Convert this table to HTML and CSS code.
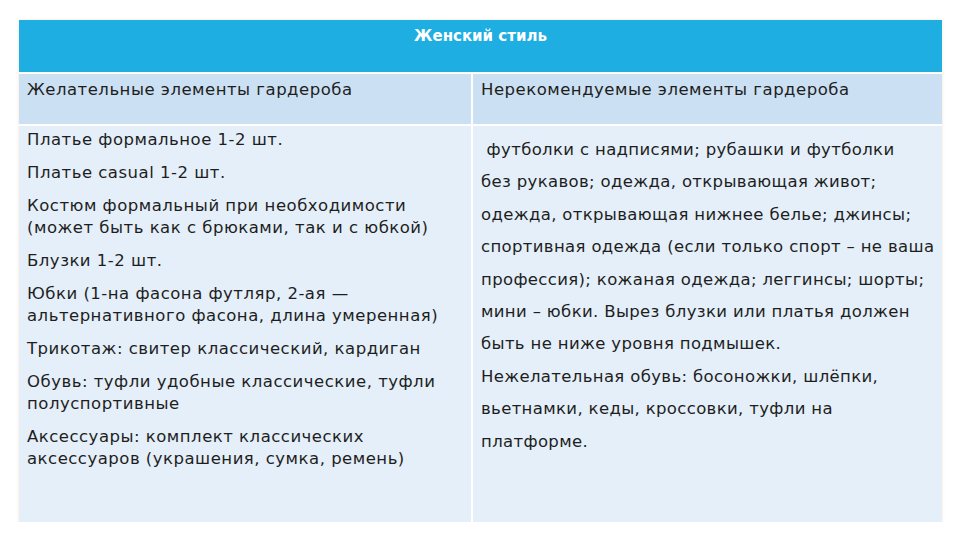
FILE: index.html
```html
<!DOCTYPE html>
<html lang="ru">
<head>
<meta charset="utf-8">
<link rel="stylesheet" href="styles.css">
</head>
<body>
<div class="style-table">
  <div class="title">Женский стиль</div>
  <div class="cell subhead">Желательные элементы гардероба</div>
  <div class="cell subhead right">Нерекомендуемые элементы гардероба</div>
  <div class="cell body list">
    <p>Платье формальное 1-2 шт.</p>
    <p>Платье casual 1-2 шт.</p>
    <p>Костюм формальный при необходимости<br>(может быть как с брюками, так и с юбкой)</p>
    <p>Блузки 1-2 шт.</p>
    <p>Юбки (1-на фасона футляр, 2-ая —<br>альтернативного фасона, длина умеренная)</p>
    <p>Трикотаж: свитер классический, кардиган</p>
    <p>Обувь: туфли удобные классические, туфли<br>полуспортивные</p>
    <p>Аксессуары: комплект классических<br>аксессуаров (украшения, сумка, ремень)</p>
  </div>
  <div class="cell body right prose">
    &nbsp;футболки с надписями; рубашки и футболки<br>без рукавов; одежда, открывающая живот;<br>одежда, открывающая нижнее белье; джинсы;<br>спортивная одежда (если только спорт – не ваша<br>профессия); кожаная одежда; леггинсы; шорты;<br>мини – юбки. Вырез блузки или платья должен<br>быть не ниже уровня подмышек.<br>Нежелательная обувь: босоножки, шлёпки,<br>вьетнамки, кеды, кроссовки, туфли на<br>платформе.
  </div>
</div>
</body>
</html>
```

FILE: styles.css
```css
html, body {
  margin: 0;
  padding: 0;
  background: #ffffff;
}

body {
  font-family: "DejaVu Sans", "Liberation Sans", sans-serif;
  color: #1e1e1e;
}

.style-table {
  margin: 20px 0 0 19px;
  width: 923px;
  display: grid;
  grid-template-columns: 452px 469px;
  grid-template-rows: 52px 50px 396px;
  column-gap: 2px;
  row-gap: 2px;
  background: #ffffff;
  box-shadow: 0 0 3px rgba(230, 200, 160, 0.45);
}

.title {
  grid-column: 1 / 3;
  background: #1eaee2;
  color: #ffffff;
  font-size: 15px;
  font-weight: bold;
  text-align: center;
  padding-top: 7px;
  box-sizing: border-box;
}

.cell {
  padding-left: 8px;
  font-size: 16.5px;
  letter-spacing: 0.5px;
  white-space: nowrap;
  overflow: hidden;
  box-sizing: border-box;
}

.subhead {
  background: #cbe0f2;
  padding-top: 6px;
}

.body {
  background: #e4eff9;
}

.list {
  padding-top: 3px;
}

.list p {
  margin: 0 0 11px 0;
  line-height: 22px;
}

.prose {
  padding-top: 8px;
  line-height: 32.4px;
  letter-spacing: 0.35px;
}
```
